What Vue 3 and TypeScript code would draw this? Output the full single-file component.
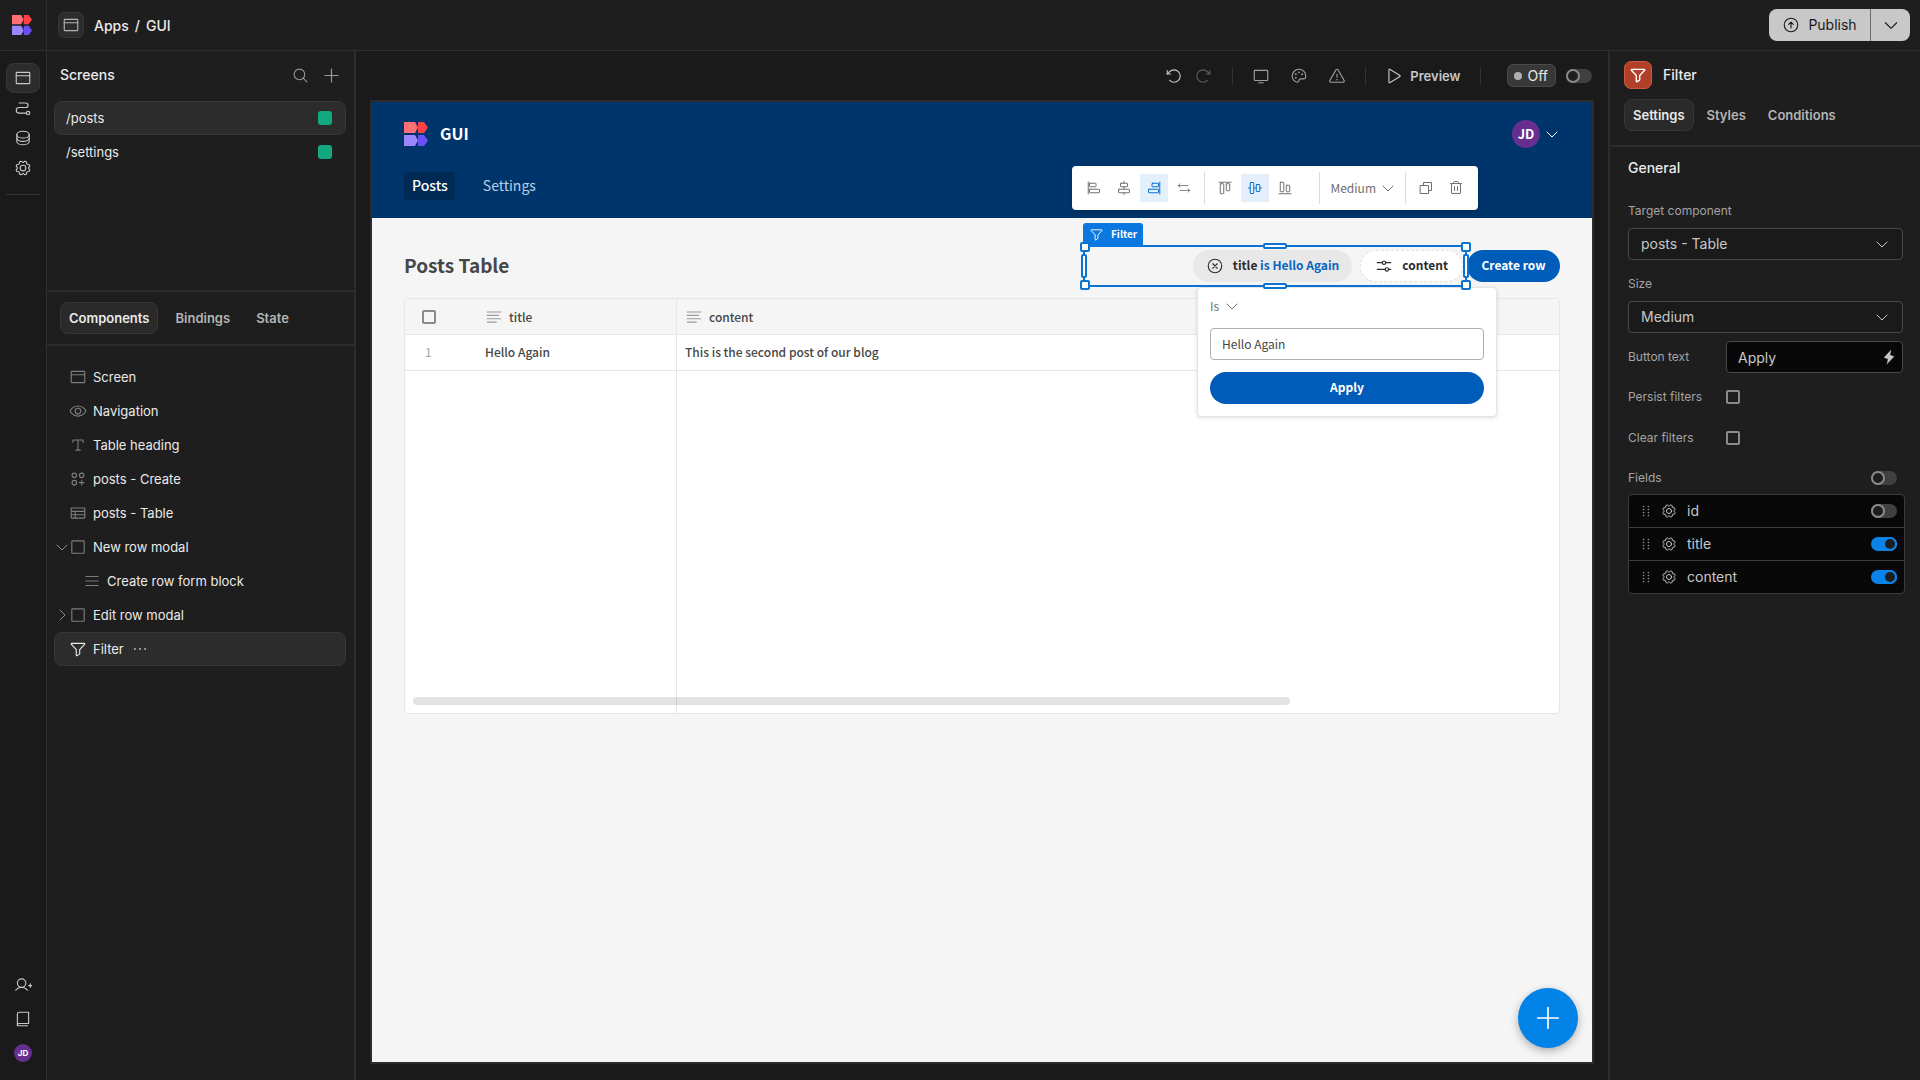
<script setup lang="ts">
import { h, ref } from 'vue'
import type { FunctionalComponent } from 'vue'

const ICONS: Record<string, string> = {
  browser: '<rect x="32" y="48" width="192" height="160" rx="8"/><path d="M32 96H224"/>',
  path: '<circle cx="200" cy="200" r="24"/><path d="M72 56h96a32 32 0 0 1 0 64H72a40 40 0 0 0 0 80H176"/>',
  database: '<ellipse cx="128" cy="80" rx="88" ry="48"/><path d="M40 80v48c0 26.5 39.4 48 88 48s88-21.5 88-48V80"/><path d="M40 128v48c0 26.5 39.4 48 88 48s88-21.5 88-48v-48"/>',
  gear: '<circle cx="128" cy="128" r="40"/><path d="M41.43,178.09A99.14,99.14,0,0,1,31.36,153.8l16.78-21a81.59,81.59,0,0,1,0-9.64l-16.77-21a99.43,99.43,0,0,1,10.05-24.3l26.71-3a81,81,0,0,1,6.81-6.81l3-26.7A99.14,99.14,0,0,1,102.2,31.36l21,16.78a81.59,81.59,0,0,1,9.64,0l21-16.77a99.43,99.43,0,0,1,24.3,10.05l3,26.71a81,81,0,0,1,6.81,6.81l26.7,3a99.14,99.14,0,0,1,10.07,24.29l-16.78,21a81.59,81.59,0,0,1,0,9.64l16.77,21a99.43,99.43,0,0,1-10,24.3l-26.71,3a81,81,0,0,1-6.81,6.81l-3,26.7a99.14,99.14,0,0,1-24.29,10.07l-21-16.78a81.59,81.59,0,0,1-9.64,0l-21,16.77a99.43,99.43,0,0,1-24.3-10l-3-26.71a81,81,0,0,1-6.81-6.81Z"/>',
  userPlus: '<circle cx="108" cy="100" r="60"/><path d="M24 200c20.55-24.45 49.56-40 84-40s63.45 15.55 84 40M208 136h48M232 112v48"/>',
  book: '<path d="M48 216a24 24 0 0 1 24-24H208V32H72A24 24 0 0 0 48 56ZM48 216v8H192"/>',
  search: '<circle cx="112" cy="112" r="80"/><path d="M168.57 168.57 224 224"/>',
  plus: '<path d="M40 128H216M128 40V216"/>',
  eye: '<path d="M128 56C48 56 16 128 16 128s32 72 112 72 112-72 112-72S208 56 128 56Z"/><circle cx="128" cy="128" r="40"/>',
  text: '<path d="M56 88V56H200V88M128 56V200M96 200h64"/>',
  circlesPlus: '<circle cx="76" cy="76" r="32"/><circle cx="180" cy="76" r="32"/><circle cx="76" cy="180" r="32"/><path d="M148 180h64M180 148v64"/>',
  table: '<path d="M32 56H224V192a8 8 0 0 1-8 8H40a8 8 0 0 1-8-8ZM32 104H224M32 152H224M88 104v96"/>',
  square: '<rect x="40" y="40" width="176" height="176" rx="8"/>',
  list: '<path d="M40 128H216M40 64H216M40 192H216"/>',
  funnel: '<path d="M34.1 61.38A8 8 0 0 1 40 48H216a8 8 0 0 1 5.92 13.38L152 136v58.13a8 8 0 0 1-3.56 6.65l-32 21.33A8 8 0 0 1 104 215.46V136Z"/>',
  down: '<path d="m208 96-80 80-80-80"/>',
  right: '<path d="m96 48 80 80-80 80"/>',
  undo: '<path d="M80 99.7H32v-48"/><path d="M65.8 190.23a88 88 0 1 0 0-124.46L32 99.7"/>',
  redo: '<path d="M176 99.7h48v-48"/><path d="M190.2 190.23a88 88 0 1 1 0-124.46L224 99.7"/>',
  monitor: '<rect x="32" y="48" width="192" height="144" rx="12"/><path d="M96 224h64"/>',
  palette: '<path d="M128,192a24,24,0,0,1,24-24h46.21a24,24,0,0,0,23.4-18.65A96.48,96.48,0,0,0,224,127.17c-.45-52.82-44.16-95.7-97-95.17a96,96,0,0,0-95,96c0,41.81,26.73,73.44,64,86.61A24,24,0,0,0,128,192Z"/><g fill="currentColor" stroke="none"><circle cx="128" cy="76" r="13"/><circle cx="83" cy="102" r="13"/><circle cx="83" cy="154" r="13"/><circle cx="173" cy="102" r="13"/></g>',
  warning: '<path d="M142.41,40.22l87.46,151.87C236,202.79,228.08,216,215.46,216H40.54C27.92,216,20,202.79,26.13,192.09L113.59,40.22C119.89,29.26,136.11,29.26,142.41,40.22ZM128 104v40"/><circle cx="128" cy="180" r="11" fill="currentColor" stroke="none"/>',
  play: '<path d="M56 39.88V216.12a8 8 0 0 0 12.15 6.69l144.08-88.12a7.82 7.82 0 0 0 0-13.38L68.15 33.19A8 8 0 0 0 56 39.88Z"/>',
  publish: '<circle cx="128" cy="128" r="96"/><path d="m96 120 32-32 32 32M128 168V88"/>',
  bolt: '<path fill="currentColor" d="m96 240 16-80-64-24L160 16l-16 80 64 24Z"/>',
  clear: '<circle cx="128" cy="128" r="96"/><path d="m96 96 64 64M160 96l-64 64"/>',
  sliders: '<circle cx="128" cy="80" r="24"/><circle cx="168" cy="176" r="24"/><path d="M152 80h72M32 80h72M192 176h32M32 176H144"/>',
  lines: '<path d="M32 56H224M32 104H192M32 152H224M32 200H160"/>',
  alignLeft: '<path d="M36 32V224"/><rect x="56" y="52" width="104" height="56" rx="8"/><rect x="56" y="148" width="160" height="56" rx="8"/>',
  alignCenter: '<path d="M128 24v28M128 108v40M128 204v28"/><rect x="72" y="52" width="112" height="56" rx="8"/><rect x="40" y="148" width="176" height="56" rx="8"/>',
  alignRight: '<path d="M220 32V224"/><rect x="96" y="52" width="104" height="56" rx="8"/><rect x="40" y="148" width="160" height="56" rx="8"/>',
  swap: '<path d="M200 84H24M56 52 24 84l32 32M56 172H232M200 140l32 32-32 32"/>',
  alignTop: '<path d="M32 36H224"/><rect x="52" y="60" width="56" height="160" rx="8"/><rect x="148" y="60" width="56" height="112" rx="8"/>',
  alignMiddle: '<path d="M24 128h28M108 128h40M204 128h28"/><rect x="52" y="40" width="56" height="176" rx="8"/><rect x="148" y="72" width="56" height="112" rx="8"/>',
  alignBottom: '<path d="M32 220H224"/><rect x="52" y="36" width="56" height="152" rx="8"/><rect x="148" y="84" width="56" height="104" rx="8"/>',
  copy: '<path d="M168 168h48V40H88v48"/><rect x="40" y="88" width="128" height="128"/>',
  trash: '<path d="M216 56H40M104 104v64M152 104v64M200 56V208a8 8 0 0 1-8 8H64a8 8 0 0 1-8-8V56M168 56V40a16 16 0 0 0-16-16H104A16 16 0 0 0 88 40V56"/>',
  dots: '<g fill="currentColor" stroke="none"><circle cx="56" cy="128" r="14"/><circle cx="128" cy="128" r="14"/><circle cx="200" cy="128" r="14"/></g>',
  grip: '<g fill="currentColor" stroke="none"><circle cx="76" cy="32" r="18"/><circle cx="180" cy="32" r="18"/><circle cx="76" cy="96" r="18"/><circle cx="180" cy="96" r="18"/><circle cx="76" cy="160" r="18"/><circle cx="180" cy="160" r="18"/><circle cx="76" cy="224" r="18"/><circle cx="180" cy="224" r="18"/></g>',
}

const Icon: FunctionalComponent<{ name: string; size?: number; weight?: number }> = (props) =>
  h('svg', {
    width: props.size ?? 18,
    height: props.size ?? 18,
    viewBox: '0 0 256 256',
    fill: 'none',
    stroke: 'currentColor',
    'stroke-width': props.weight ?? 16,
    'stroke-linecap': 'round',
    'stroke-linejoin': 'round',
    'aria-hidden': 'true',
    style: 'display:block;flex:none',
    innerHTML: ICONS[props.name],
  })
Icon.props = ['name', 'size', 'weight']

const Logo: FunctionalComponent<{ size: number }> = (props) =>
  h('svg', {
    width: props.size,
    height: props.size,
    viewBox: '0 0 24 24',
    'aria-hidden': 'true',
    style: 'display:block;flex:none',
    innerHTML:
      '<path fill="#ff6f73" d="M0 0h11l3 5.5-3 5.5H0z"/><path fill="#ff4047" d="M14 0h6l4 5.5-4 5.5h-6z"/><path fill="#9b87fb" d="M0 13h11l3 5.5-3 5.5H0z"/><path fill="#6a4ff5" d="M14 13h6l4 5.5-4 5.5h-6z"/>',
  })
Logo.props = ['size']

interface TreeNode {
  label: string
  icon: string
  toggle?: 'down' | 'right'
  child?: boolean
  selected?: boolean
}

const screens = ['/posts', '/settings']
const tree: TreeNode[] = [
  { label: 'Screen', icon: 'browser' },
  { label: 'Navigation', icon: 'eye' },
  { label: 'Table heading', icon: 'text' },
  { label: 'posts - Create', icon: 'circlesPlus' },
  { label: 'posts - Table', icon: 'table' },
  { label: 'New row modal', icon: 'square', toggle: 'down' },
  { label: 'Create row form block', icon: 'list', child: true },
  { label: 'Edit row modal', icon: 'square', toggle: 'right' },
  { label: 'Filter', icon: 'funnel', selected: true },
]
const handles = ['nw', 'n', 'ne', 'w', 'e', 'sw', 's', 'se']
const fields = ref([
  { name: 'id', on: false },
  { name: 'title', on: true },
  { name: 'content', on: true },
])
const buttonText = ref('Apply')
const filterValue = ref('Hello Again')
</script>

<template>
  <div class="app">
    <header class="topbar">
      <a class="brand" href="#" aria-label="Home"><Logo :size="20" /></a>
      <span class="app-icon"><Icon name="browser" /></span>
      <nav class="crumbs" aria-label="Breadcrumb">
        <a href="#">Apps</a><span>/</span><a href="#">GUI</a>
      </nav>
      <div class="publish">
        <button type="button" class="publish-main"><Icon name="publish" />Publish</button>
        <button type="button" class="publish-more" aria-label="More"><Icon name="down" :size="18" /></button>
      </div>
    </header>

    <div class="body">
      <nav class="rail" aria-label="Workspace">
        <button type="button" class="rail-btn active" aria-label="Design"><Icon name="browser" /></button>
        <button type="button" class="rail-btn" aria-label="Automations"><Icon name="path" /></button>
        <button type="button" class="rail-btn" aria-label="Data"><Icon name="database" /></button>
        <button type="button" class="rail-btn" aria-label="Settings"><Icon name="gear" /></button>
        <hr />
        <div class="rail-foot">
          <button type="button" aria-label="Invite"><Icon name="userPlus" /></button>
          <button type="button" aria-label="Docs"><Icon name="book" /></button>
          <button type="button" class="avatar small">JD</button>
        </div>
      </nav>

      <aside class="left">
        <section class="screens">
          <div class="panel-head">
            <h2>Screens</h2>
            <button type="button" aria-label="Search"><Icon name="search" :size="17" /></button>
            <button type="button" aria-label="Add screen"><Icon name="plus" :size="19" /></button>
          </div>
          <ul>
            <li v-for="(s, i) in screens" :key="s">
              <a href="#" class="row screen-row" :class="{ selected: i === 0 }">{{ s }}<i class="role"></i></a>
            </li>
          </ul>
        </section>
        <div class="tabs left-tabs">
          <button type="button" class="active">Components</button>
          <button type="button">Bindings</button>
          <button type="button">State</button>
        </div>
        <ul class="tree">
          <li v-for="n in tree" :key="n.label">
            <a href="#" class="row tree-row" :class="{ selected: n.selected, child: n.child }">
              <span class="twist"><Icon v-if="n.toggle" :name="n.toggle" :size="16" /></span>
              <Icon class="node-icon" :name="n.icon" />
              <span class="node-label">{{ n.label }}</span>
              <Icon v-if="n.selected" class="more" name="dots" />
            </a>
          </li>
        </ul>
      </aside>

      <main class="stage">
        <div class="stage-bar">
          <div class="group tight">
            <button type="button" class="bright" aria-label="Undo"><Icon name="undo" /></button>
            <button type="button" class="dim" aria-label="Redo"><Icon name="redo" /></button>
          </div>
          <div class="group">
            <button type="button" aria-label="Device"><Icon name="monitor" /></button>
            <button type="button" aria-label="Theme"><Icon name="palette" /></button>
            <button type="button" aria-label="Errors"><Icon name="warning" /></button>
          </div>
          <div class="group last">
            <button type="button" class="preview"><Icon name="play" />Preview</button>
          </div>
          <label class="live">
            <span class="status">Off</span>
            <input type="checkbox" class="toggle" />
          </label>
        </div>

        <div class="frame">
          <header class="site-head">
            <div class="site-top">
              <Logo :size="24" />
              <strong>GUI</strong>
              <button type="button" class="account">
                <span class="avatar">JD</span><Icon name="down" :size="16" />
              </button>
            </div>
            <nav class="site-nav">
              <a href="#" class="active">Posts</a>
              <a href="#">Settings</a>
            </nav>
            <div class="toolbar">
              <div class="tools">
                <button type="button" aria-label="Align left"><Icon name="alignLeft" :size="16" /></button>
                <button type="button" aria-label="Align center"><Icon name="alignCenter" :size="16" /></button>
                <button type="button" class="on" aria-label="Align right"><Icon name="alignRight" :size="16" /></button>
                <button type="button" aria-label="Stretch"><Icon name="swap" :size="14" /></button>
              </div>
              <div class="tools wide">
                <button type="button" aria-label="Align top"><Icon name="alignTop" :size="16" /></button>
                <button type="button" class="on" aria-label="Align middle"><Icon name="alignMiddle" :size="16" /></button>
                <button type="button" aria-label="Align bottom"><Icon name="alignBottom" :size="16" /></button>
              </div>
              <div class="tools size">
                <button type="button" class="size-btn">Medium<Icon name="down" :size="16" /></button>
              </div>
              <div class="tools">
                <button type="button" aria-label="Duplicate"><Icon name="copy" :size="16" /></button>
                <button type="button" aria-label="Delete"><Icon name="trash" :size="16" /></button>
              </div>
            </div>
          </header>

          <div class="site-body">
            <div class="heading-row">
              <h1>Posts Table</h1>
              <div class="filter">
                <button type="button" class="pill set">
                  <Icon name="clear" /><span>title <em>is Hello Again</em></span>
                </button>
                <button type="button" class="pill"><Icon name="sliders" /><span>content</span></button>
                <div class="popover">
                  <button type="button" class="operator">Is<Icon name="down" :size="16" /></button>
                  <input v-model="filterValue" type="text" aria-label="Filter value" />
                  <button type="button" class="cta">Apply</button>
                </div>
                <div class="selection">
                  <span class="tag"><Icon name="funnel" :size="15" />Filter</span>
                  <i v-for="p in handles" :key="p" class="handle" :class="p"></i>
                </div>
              </div>
              <button type="button" class="cta create">Create row</button>
            </div>

            <div class="grid">
              <table>
                <colgroup><col class="c-num" /><col class="c-title" /><col /></colgroup>
                <thead>
                  <tr>
                    <th><input type="checkbox" class="box" aria-label="Select all" /></th>
                    <th><span class="th"><Icon name="lines" :size="18" />title</span></th>
                    <th><span class="th"><Icon name="lines" :size="18" />content</span></th>
                  </tr>
                </thead>
                <tbody>
                  <tr>
                    <td>1</td>
                    <td>Hello Again</td>
                    <td>This is the second post of our blog</td>
                  </tr>
                  <tr class="filler"><td></td><td></td><td></td></tr>
                </tbody>
              </table>
              <div class="scrollbar"></div>
            </div>
          </div>
          <button type="button" class="fab" aria-label="Add"><Icon name="plus" :size="30" :weight="14" /></button>
        </div>
      </main>

      <aside class="right">
        <div class="inspector-head">
          <div class="inspector-title"><span class="badge"><Icon name="funnel" :weight="20" /></span><h2>Filter</h2></div>
          <div class="tabs">
            <button type="button" class="active">Settings</button>
            <button type="button">Styles</button>
            <button type="button">Conditions</button>
          </div>
        </div>
        <form class="settings" @submit.prevent>
          <h3>General</h3>
          <div class="stacked">
            <label for="target">Target component</label>
            <div class="select"><select id="target"><option>posts - Table</option></select><Icon name="down" :size="16" /></div>
          </div>
          <div class="stacked">
            <label for="size">Size</label>
            <div class="select"><select id="size"><option>Medium</option></select><Icon name="down" :size="16" /></div>
          </div>
          <div class="inline first">
            <label for="btn-text">Button text</label>
            <div class="bind"><input id="btn-text" v-model="buttonText" type="text" /><Icon name="bolt" :size="16" :weight="4" /></div>
          </div>
          <div class="inline">
            <label for="persist">Persist filters</label><input id="persist" type="checkbox" class="box" />
          </div>
          <div class="inline">
            <label for="clear">Clear filters</label><input id="clear" type="checkbox" class="box" />
          </div>
          <div class="fields-head">
            <label for="all-fields">Fields</label><input id="all-fields" type="checkbox" class="toggle" />
          </div>
          <ul class="fields">
            <li v-for="f in fields" :key="f.name">
              <Icon class="grip" name="grip" :size="12" />
              <Icon name="gear" :size="16" />
              <label :for="'field-' + f.name">{{ f.name }}</label>
              <input :id="'field-' + f.name" v-model="f.on" type="checkbox" class="toggle" />
            </li>
          </ul>
        </form>
      </aside>
    </div>
  </div>
</template>

<style>
body {
  margin: 0;
  background: #1a1a1a;
}
</style>

<style scoped>
*,
*::before {
  box-sizing: border-box;
}
.app {
  display: flex;
  flex-direction: column;
  min-height: 100vh;
  background: #1a1a1a;
  color: #eaeaea;
  font: 14px/20px Inter, sans-serif;
}
button {
  margin: 0;
  padding: 0;
  border: 0;
  background: none;
  color: inherit;
  font: inherit;
  cursor: pointer;
}
a {
  color: inherit;
  text-decoration: none;
}
ul {
  margin: 0;
  padding: 0;
  list-style: none;
}
h1,
h2,
h3 {
  margin: 0;
  font-size: 14px;
  font-weight: 500;
}

/* top bar */
.topbar {
  display: flex;
  align-items: center;
  height: 51px;
  border-bottom: 1px solid #2e2e2e;
  background: #1e1e1e;
  padding-right: 10px;
}
.brand {
  display: flex;
  align-items: center;
  width: 47px;
  height: 50px;
  padding-left: 12px;
  border-right: 1px solid #2e2e2e;
}
.app-icon {
  display: grid;
  place-items: center;
  width: 26px;
  height: 26px;
  margin: 0 10px 0 11px;
  border: 1px solid #363636;
  border-radius: 6px;
  background: #2c2c2c;
  color: #b4b4b4;
}
.crumbs {
  display: flex;
  gap: 6px;
  padding-top: 1px;
  font-weight: 500;
}
.publish {
  display: flex;
  height: 32px;
  margin-left: auto;
  border-radius: 8px;
  background: #c8c8c8;
  color: #1a1a1a;
}
.publish button {
  display: flex;
  align-items: center;
  justify-content: center;
}
.publish-main {
  width: 101px;
  gap: 8px;
}
.publish .publish-more {
  width: 40px;
  border-left: 1px solid #6c6c6c;
}

.body {
  display: flex;
  flex: 1;
}

/* rail */
.rail {
  display: flex;
  flex-direction: column;
  align-items: center;
  flex: none;
  width: 47px;
  padding: 12px 0 18px;
  border-right: 1px solid #2e2e2e;
  color: #c8c8c8;
}
.rail-btn {
  display: grid;
  place-items: center;
  width: 34px;
  height: 30px;
}
.rail-btn.active {
  border: 1px solid #363636;
  border-radius: 8px;
  background: #2c2c2c;
}
.rail hr {
  width: 34px;
  margin: 11px 0 0;
  border: 0;
  border-top: 1px solid #333;
}
.rail-foot {
  display: flex;
  flex-direction: column;
  align-items: center;
  gap: 16px;
  margin-top: auto;
}
.avatar {
  display: grid;
  place-items: center;
  width: 28px;
  height: 28px;
  border-radius: 50%;
  background: #662f8f;
  color: #fff;
  font-size: 13px;
  font-weight: 700;
}
.avatar.small {
  width: 18px;
  height: 18px;
  font-size: 8px;
  line-height: 18px;
}

/* left panel */
.left {
  flex: none;
  width: 309px;
  border-right: 2px solid #2c2c2c;
  background: #1e1e1e;
}
.screens {
  height: 241px;
  border-bottom: 2px solid #2c2c2c;
}
.panel-head {
  display: flex;
  align-items: center;
  gap: 13px;
  height: 50px;
  padding: 0 13px 2px;
  color: #9a9a9a;
}
.panel-head h2 {
  flex: 1;
  color: #eaeaea;
}
.row {
  display: flex;
  align-items: center;
  height: 34px;
  margin: 0 8px 0 7px;
  border: 1px solid transparent;
  border-radius: 8px;
  font-size: 13px;
}
.row.selected {
  border-color: #373737;
  background: #2c2c2c;
}
.screen-row {
  justify-content: space-between;
  padding: 0 13px 0 11px;
}
.role {
  width: 14px;
  height: 14px;
  border-radius: 3px;
  background: #12a980;
}
.tabs {
  display: flex;
  gap: 4px;
  color: #b4b4b4;
}
.tabs button {
  height: 32px;
  padding: 0 8px;
  border: 1px solid transparent;
  border-radius: 8px;
  font-size: 13px;
  font-weight: 600;
}
.tabs .active {
  border-color: #363636;
  background: #2a2a2a;
  color: #eaeaea;
}
.left-tabs {
  gap: 8px;
  padding: 10px 13px;
  border-bottom: 2px solid #2c2c2c;
}
.tree {
  padding-top: 14px;
}
.twist {
  width: 15px;
  margin-left: -1px;
  color: #8a8a8a;
}
.node-icon {
  color: #7d7d7d;
}
.node-label {
  margin-left: 6px;
}
.child .twist {
  width: 29px;
}
.selected .node-icon {
  color: #eaeaea;
}
.more {
  margin-left: 7px;
  color: #b4b4b4;
}

/* stage */
.stage {
  display: flex;
  flex-direction: column;
  flex: 1;
  min-width: 0;
  padding: 0 14px 16px;
}
.stage-bar {
  display: flex;
  align-items: center;
  justify-content: flex-end;
  height: 49px;
  padding-right: 2px;
  color: #a0a0a0;
}
.group {
  display: flex;
  gap: 20px;
  padding: 0 19px;
  border-right: 1px solid #333;
}
.group.tight {
  gap: 11px;
  padding-right: 20px;
}
.group.last {
  padding-right: 20px;
}
.bright {
  color: #c8c8c8;
}
.dim {
  color: #5c5c5c;
}
.preview {
  display: flex;
  align-items: center;
  gap: 7px;
  color: #c8c8c8;
  font-size: 13px;
  font-weight: 600;
  line-height: 18px;
}
.live {
  display: flex;
  align-items: center;
  gap: 10px;
  margin-left: 26px;
}
.status {
  display: flex;
  align-items: center;
  gap: 5px;
  height: 23px;
  padding: 0 7px 0 6px;
  border: 1px solid #4a4a4a;
  border-radius: 6px;
  background: #383838;
  color: #eaeaea;
}
.status::before {
  width: 8px;
  height: 8px;
  border-radius: 50%;
  background: #b0b0b0;
  content: '';
}
.toggle {
  flex: none;
  appearance: none;
  width: 26px;
  height: 14px;
  margin: 0;
  border-radius: 7px;
  background: #404040;
}
.toggle::before {
  display: block;
  width: 14px;
  height: 14px;
  border: 2px solid #8a8a8a;
  border-radius: 50%;
  background: #1e1e1e;
  content: '';
}
.toggle:checked {
  background: #0a84e8;
}
.toggle:checked::before {
  margin-left: 12px;
  border-color: #0a84e8;
}

/* previewed app */
.frame {
  position: relative;
  display: flex;
  flex-direction: column;
  flex: 1;
  border: 2px solid #2c2c2c;
  background: #f5f5f5;
  color: #464646;
  font: 13px/20px 'Noto Sans CJK SC', 'Open Sans', sans-serif;
}
.site-head {
  position: relative;
  height: 116px;
  padding: 18px 32px 0;
  background: #00356b;
  color: #fff;
}
.site-top {
  display: flex;
  align-items: center;
  gap: 12px;
  height: 28px;
}
.site-top strong {
  padding-bottom: 2px;
  font-size: 16px;
}
.account {
  display: flex;
  align-items: center;
  gap: 4px;
  margin-left: auto;
}
.site-nav {
  display: flex;
  gap: 20px;
  margin-top: 24px;
}
.site-nav a {
  padding: 3px 7px 5px 8px;
  border-radius: 4px;
  color: #b8cfe6;
  font-size: 14px;
}
.site-nav .active {
  background: #002a56;
  color: #fff;
  font-weight: 500;
}
.toolbar {
  position: absolute;
  top: 64px;
  right: 114px;
  display: flex;
  align-items: center;
  height: 44px;
  padding: 0 2px;
  border-radius: 4px;
  background: #fff;
  box-shadow: 0 2px 6px rgb(0 0 0 / 20%);
  color: #707070;
}
.tools {
  display: flex;
  gap: 2px;
  height: 32px;
  padding: 2px 6px;
  border-right: 1px solid #dcdcdc;
}
.tools:last-child {
  border-right: 0;
}
.tools.wide {
  padding-right: 20px;
}
.tools.size {
  padding: 2px 9px 2px 10px;
}
.tools button {
  display: grid;
  place-items: center;
  width: 28px;
  height: 28px;
}
.tools .size-btn {
  display: flex;
  align-items: center;
  gap: 4px;
  width: auto;
  font-size: 12px;
}
.tools .on {
  background: #e3effb;
  color: #0a6fd0;
}
.site-body {
  padding: 32px;
}
.heading-row {
  display: flex;
  height: 32px;
}
h1 {
  flex: 1;
  font-size: 19px;
  font-weight: 600;
  line-height: 30px;
}
.filter {
  position: relative;
  display: flex;
  justify-content: flex-end;
  gap: 8px;
  width: 384px;
  padding-right: 4px;
}
.pill {
  display: flex;
  align-items: center;
  gap: 9px;
  height: 32px;
  padding: 0 14px;
  border: 1px dashed #e2e2e2;
  border-radius: 16px;
  background: #fff;
  color: #2c2c2c;
  font-size: 12px;
  font-weight: 700;
}
.pill span {
  padding-bottom: 2px;
}
.pill.set {
  padding: 0 12px;
  border-color: #e8e8e8;
  background: #e8e8e8;
}
.pill em {
  color: #0a66c0;
  font-style: normal;
}
.cta {
  height: 32px;
  padding: 0 0 2px;
  border-radius: 16px;
  background: #005cb9;
  color: #fff;
  font-size: 12px;
  font-weight: 700;
}
.create {
  width: 93px;
}
.selection {
  position: absolute;
  z-index: 3;
  inset: -5px 0;
  border: 2px solid #0a74d0;
  pointer-events: none;
}
.tag {
  position: absolute;
  bottom: 100%;
  left: -2px;
  display: flex;
  align-items: center;
  gap: 7px;
  height: 24px;
  padding: 0 6px 2px;
  border-radius: 3px 3px 0 0;
  background: #0a78e0;
  color: #fff;
  font-size: 10px;
  font-weight: 700;
}
.handle {
  position: absolute;
  width: 10px;
  height: 10px;
  border: 2px solid #0a74d0;
  border-radius: 2px;
  background: #fff;
}
.n,
.s {
  left: calc(50% - 12px);
  width: 24px;
  height: 6px;
}
.e,
.w {
  top: calc(50% - 12px);
  width: 6px;
  height: 24px;
}
.nw,
.ne {
  top: -5px;
}
.sw,
.se {
  bottom: -5px;
}
.nw,
.sw {
  left: -5px;
}
.ne,
.se {
  right: -6px;
}
.n {
  top: -4px;
}
.s {
  bottom: -4px;
}
.w {
  left: -4px;
}
.e {
  right: -4px;
}
.popover {
  position: absolute;
  z-index: 2;
  top: 37px;
  left: 114px;
  display: flex;
  flex-direction: column;
  width: 300px;
  padding: 8px 12px 12px;
  border: 1px solid #e4e4e4;
  border-radius: 4px;
  background: #fff;
  box-shadow: 0 1px 4px rgb(0 0 0 / 12%);
}
.operator {
  display: flex;
  align-items: center;
  gap: 5px;
  color: #6e6e6e;
  font-size: 12px;
}
.popover input {
  height: 32px;
  margin: 12px 0;
  padding: 0 11px 2px;
  border: 1px solid #adadad;
  border-radius: 4px;
  background: #fff;
  color: #464646;
  font: inherit;
  font-size: 12px;
}
.grid {
  position: relative;
  height: 416px;
  margin-top: 16px;
  overflow: hidden;
  border: 1px solid #e6e6e6;
  border-radius: 4px;
  background: #fff;
}
table {
  width: 100%;
  height: 100%;
  border-spacing: 0;
  table-layout: fixed;
}
.c-num {
  width: 72px;
}
.c-title {
  width: 200px;
}
th,
td {
  height: 36px;
  padding: 0 8px 2px;
  border-bottom: 1px solid #e6e6e6;
  font-size: 12px;
  font-weight: 500;
  text-align: left;
}
th {
  padding-bottom: 0;
  background: #f5f5f5;
}
th:nth-child(2),
td:nth-child(2) {
  border-right: 1px solid #e6e6e6;
}
td:first-child {
  padding-left: 20px;
  color: #a4a4a4;
  font-weight: 400;
}
th:first-child {
  padding-left: 17px;
}
.filler td {
  height: auto;
  border-bottom: 0;
}
.th {
  display: flex;
  align-items: center;
  gap: 6px;
}
.th svg {
  color: #9a9a9a;
}
.box {
  display: block;
  flex: none;
  appearance: none;
  width: 14px;
  height: 14px;
  margin: 0;
  border: 2px solid #8a8a8a;
  border-radius: 2px;
}
.scrollbar {
  position: absolute;
  bottom: 8px;
  left: 8px;
  width: 76%;
  height: 8px;
  border-radius: 4px;
  background: rgb(0 0 0 / 11%);
}
.fab {
  position: absolute;
  right: 14px;
  bottom: 14px;
  display: grid;
  place-items: center;
  width: 60px;
  height: 60px;
  border-radius: 50%;
  background: #0082e6;
  box-shadow: 0 3px 8px rgb(0 0 0 / 30%);
  color: #fff;
}

/* inspector */
.right {
  flex: none;
  width: 312px;
  border-left: 2px solid #2c2c2c;
  background: #1e1e1e;
}
.inspector-head {
  padding: 10px 14px 14px;
  border-bottom: 2px solid #2c2c2c;
}
.inspector-title {
  display: flex;
  align-items: center;
  gap: 11px;
  margin-bottom: 10px;
}
.badge {
  display: grid;
  place-items: center;
  width: 28px;
  height: 28px;
  border: 1px solid #cb5a40;
  border-radius: 7px;
  background: #b23f28;
  color: #fff;
}
.settings {
  padding: 11px 15px 0 18px;
}
.settings label {
  color: #a4a4a4;
  font-size: 12px;
}
h3 {
  margin-bottom: 23px;
}
.stacked {
  display: flex;
  flex-direction: column;
  gap: 7px;
  margin: 0 2px 14px 0;
}
.select,
.bind {
  position: relative;
}
.select svg,
.bind svg {
  position: absolute;
  top: 8px;
  right: 13px;
  color: #c8c8c8;
  pointer-events: none;
}
.bind svg {
  right: 6px;
}
.select select,
.bind input {
  display: block;
  appearance: none;
  width: 100%;
  height: 32px;
  padding: 0 12px;
  border: 1px solid #484848;
  border-radius: 4px;
  background: #1a1a1a;
  color: #c8c8c8;
  font: inherit;
}
.bind input {
  padding: 0 11px;
  background: #080808;
}
.inline {
  display: flex;
  align-items: center;
  height: 41px;
  margin-right: 2px;
}
.inline.first {
  height: 32px;
  margin: -6px 2px 3px 0;
}
.inline label {
  width: 98px;
}
.bind {
  flex: 1;
}
.fields-head {
  display: flex;
  align-items: center;
  justify-content: space-between;
  height: 36px;
  padding: 4px 8px 0 0;
}
.fields {
  border: 1px solid #3c3c3c;
  border-radius: 4px;
  background: #080808;
}
.fields li {
  display: flex;
  align-items: center;
  height: 32px;
  padding: 0 7px 0 11px;
  color: #c8c8c8;
}
.fields li + li {
  height: 33px;
  border-top: 1px solid #3c3c3c;
}
.fields label {
  flex: 1;
  margin-left: 10px;
  color: #c8c8c8;
  font-size: 14px;
}
.grip {
  margin-right: 9px;
  color: #8a8a8a;
}
</style>
